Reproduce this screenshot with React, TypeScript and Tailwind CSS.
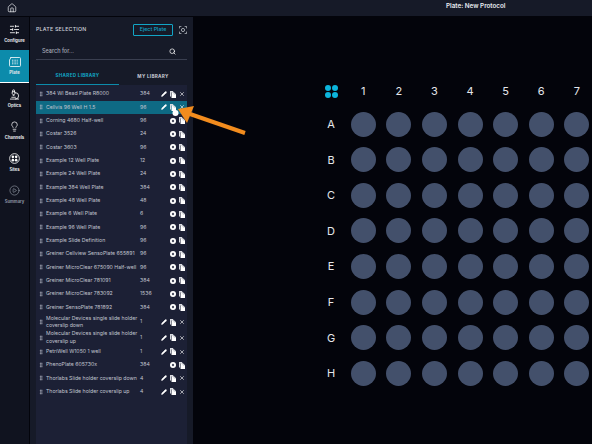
import React from "react";
import { Home, SlidersHorizontal, Microscope, Lightbulb, CirclePlay, Search, Pencil, X, GripVertical } from "lucide-react";

type Row = { n: string; c: string; own?: boolean; h?: number; sel?: boolean };
const rows: Row[] = [
  { n: "384 Wl Bead Plate R8000", c: "384", own: true },
  { n: "Cellvis 96 Well H 1.5", c: "96", own: true, sel: true },
  { n: "Corning 4680 Half-well", c: "96" },
  { n: "Costar 3526", c: "24" },
  { n: "Costar 3603", c: "96" },
  { n: "Example 12 Well Plate", c: "12" },
  { n: "Example 24 Well Plate", c: "24" },
  { n: "Example 384 Well Plate", c: "384" },
  { n: "Example 48 Well Plate", c: "48" },
  { n: "Example 6 Well Plate", c: "6" },
  { n: "Example 96 Well Plate", c: "96" },
  { n: "Example Slide Definition", c: "96" },
  { n: "Greiner Cellview SensoPlate 655891", c: "96" },
  { n: "Greiner MicroClear 675090 Half-well", c: "96" },
  { n: "Greiner MicroClear 781091", c: "384" },
  { n: "Greiner MicroClear 783092", c: "1536" },
  { n: "Greiner SensoPlate 781892", c: "384" },
  { n: "Molecular Devices single slide holder coverslip down", c: "1", own: true, h: 16 },
  { n: "Molecular Devices single slide holder coverslip up", c: "1", own: true, h: 15 },
  { n: "PetriWell W1050 1 well", c: "1", own: true },
  { n: "PhenoPlate 605730x", c: "384" },
  { n: "Thorlabs Slide holder coverslip down", c: "4", own: true },
  { n: "Thorlabs Slide holder coverslip up", c: "4", own: true },
];

function PlateIcon() {
  return (
    <svg viewBox="0 0 12 10" className="w-[12px] h-[10px]" fill="none" stroke="white" strokeWidth="0.8">
      <path d="M1.5 .5H10.5A1 1 0 0 1 11.5 1.5V8.5A1 1 0 0 1 10.5 9.5H1.5A1 1 0 0 1 .5 8.5V3L2 .5Z" />
      <path d="M3 3.2H9M3 5H9M3 6.8H9" strokeDasharray="1 .6" />
    </svg>
  );
}
function SitesIcon() {
  return (
    <svg viewBox="0 0 12 12" className="w-[11px] h-[11px]">
      <circle cx="6" cy="6" r="5.3" fill="none" stroke="white" strokeWidth=".9" />
      {[[4.2, 4.2], [7.8, 4.2], [4.2, 7.8], [7.8, 7.8]].map(([x, y]) => <circle key={`${x}${y}`} cx={x} cy={y} r="1.4" fill="white" />)}
    </svg>
  );
}
function ScanIcon() {
  return (
    <svg viewBox="0 0 10 10" className="w-[8px] h-[8px]" fill="none" stroke="#d1d5db" strokeWidth=".9">
      <path d="M.5 3V.5H3M7 .5H9.5V3M9.5 7V9.5H7M3 9.5H.5V7" />
      <circle cx="5" cy="5" r="2" />
    </svg>
  );
}
function CopyIcon() {
  return (
    <svg viewBox="0 0 7 8" className="w-[6px] h-[7px]">
      <path d="M0 0H3.6L4 1.6H1.2V6.4H0Z" fill="#d8dae0" />
      <path d="M1.8 1.4H4.6L7 3.6V8H1.8Z" fill="white" />
      <path d="M4.6 1.4V3.6H7" fill="none" stroke="#6b7080" strokeWidth=".4" />
    </svg>
  );
}
function DotIcon() {
  return (
    <svg viewBox="0 0 6 6" className="w-[6px] h-[6px]">
      <circle cx="3" cy="3" r="3" fill="white" />
      <circle cx="3" cy="3" r="1.2" fill="#4b5063" />
    </svg>
  );
}
const nav = [
  { l: "Configure", i: <SlidersHorizontal size={11} strokeWidth={1.8} className="text-white" /> },
  { l: "Plate", i: <PlateIcon />, active: true },
  { l: "Optics", i: <Microscope size={11} strokeWidth={1.8} className="text-white" /> },
  { l: "Channels", i: <Lightbulb size={11} strokeWidth={1.6} className="text-white" /> },
  { l: "Sites", i: <SitesIcon /> },
  { l: "Summary", i: <CirclePlay size={11} strokeWidth={1.3} className="text-[#9ca3af]" />, dim: true },
];
const cols = [1, 2, 3, 4, 5, 6, 7];
const letters = ["A", "B", "C", "D", "E", "F", "G", "H"];

export default function App() {
  return (
    <div className="relative w-[592px] h-[444px] overflow-hidden bg-[#03040b] text-white flex flex-col" style={{ fontFamily: "Inter, Lato, sans-serif" }}>
      <header className="h-[16px] shrink-0 bg-[#161a28] flex items-center relative">
        <Home size={10} strokeWidth={1.8} className="ml-[7px] text-[#e5e7eb]" />
        <span className="absolute left-[446px] top-[1px] text-[6.3px] leading-[11px] font-semibold text-[#e8eaf0]">Plate: New Protocol</span>
      </header>
      <div className="flex flex-1 min-h-0 mt-[1px]">
        <nav className="w-[29px] shrink-0 bg-[#10131f] flex flex-col pt-[1px]">
          {nav.map((x) => (
            <div key={x.l} className={`flex flex-col items-center justify-center ${x.active ? "bg-[#0c8bab] border-b border-white h-[33px]" : "h-[32px]"}`}>
              {x.i}
              <span className={`text-[4.2px] leading-[6px] mt-[3px] font-bold ${x.dim ? "text-[#8b90a0]" : "text-[#e5e7eb]"}`}>{x.l}</span>
            </div>
          ))}
        </nav>
        <div className="w-[1px] bg-[#03040b]" />
        <aside className="w-[163px] shrink-0 bg-[#161a28] px-[6px] flex flex-col">
          <div className="h-[26px] flex items-center">
            <span className="text-[5.3px] font-medium text-[#cfd2da] tracking-[0.2px]">PLATE SELECTION</span>
            <span className="ml-auto border border-[#12a5c6] rounded-[1px] h-[12px] w-[40px] flex items-center justify-center text-[5.3px] font-medium text-[#12a5c6]">Eject Plate</span>
            <span className="ml-[6px]"><ScanIcon /></span>
          </div>
          <div className="h-[17px] flex items-center border-b border-[#3a3f50] pl-[6px] pr-[11px]">
            <span className="text-[5.5px] font-medium text-[#a8acb8]">Search for...</span>
            <Search size={7} strokeWidth={2.5} className="ml-auto text-white" />
          </div>
          <div className="flex h-[25px] pt-[9px] text-[4.6px] font-bold tracking-[0.3px]">
            <div className="w-[83px] border-b border-[#0c8bab] flex items-center justify-center text-[#12a5c6]">SHARED LIBRARY</div>
            <div className="flex-1 flex items-center justify-center text-[#c8ccd6]">MY LIBRARY</div>
          </div>
          <div className="flex-1 bg-[#1c2035] flex flex-col pt-[2.5px]">
            {rows.map((r) => (
              <div key={r.n} className={`flex items-center shrink-0 ${r.sel ? "bg-[#0e6a84]" : ""}`} style={{ height: r.h ?? 13.33 }}>
                <GripVertical size={6} className="w-[10px] text-[#b5b8c4]" />
                <span className="w-[94px] text-[5.2px] leading-[7.5px] text-[#c2c5d0]">{r.n}</span>
                <span className="w-[19px] text-[5.2px] text-[#c2c5d0]">{r.c}</span>
                <div className="grid grid-cols-[repeat(3,9px)] justify-items-center items-center">
                  {r.own ? <Pencil size={6} fill="white" className="text-white" /> : <span />}
                  {r.own ? null : <DotIcon />}
                  <CopyIcon />
                  {r.own ? <X size={6} strokeWidth={2.4} className="text-white" /> : null}
                </div>
              </div>
            ))}
          </div>
        </aside>
        <main className="flex-1 min-w-0 pl-[123.5px] pt-[60px]">
          <div className="grid grid-cols-[29px_repeat(7,35.6px)] grid-rows-[29.4px_repeat(8,35.6px)] items-center justify-items-center">
            <div className="grid grid-cols-2 gap-[1px]">
              {[0, 1, 2, 3].map((i) => <span key={i} className="w-[6px] h-[6px] rounded-full bg-[#0cb5dc]" />)}
            </div>
            {cols.map((c) => <span key={c} className="text-[11px] text-[#e5e7eb]">{c}</span>)}
            {letters.map((l) => (
              <React.Fragment key={l}>
                <span className="text-[11px] text-[#e5e7eb]">{l}</span>
                {cols.map((c) => <span key={c} className="w-[25px] h-[25px] rounded-full bg-[#43506b]" />)}
              </React.Fragment>
            ))}
          </div>
        </main>
      </div>
      <svg className="absolute left-[170px] top-[100px] w-[85px] h-[40px]" viewBox="0 0 85 40">
        <circle cx="5.5" cy="13" r="3" fill="white" />
        <path d="M75 33 L20 14" stroke="#f28c1e" strokeWidth="4" />
        <path d="M8 9 L24 6 L17 23 Z" fill="#f28c1e" />
      </svg>
    </div>
  );
}
